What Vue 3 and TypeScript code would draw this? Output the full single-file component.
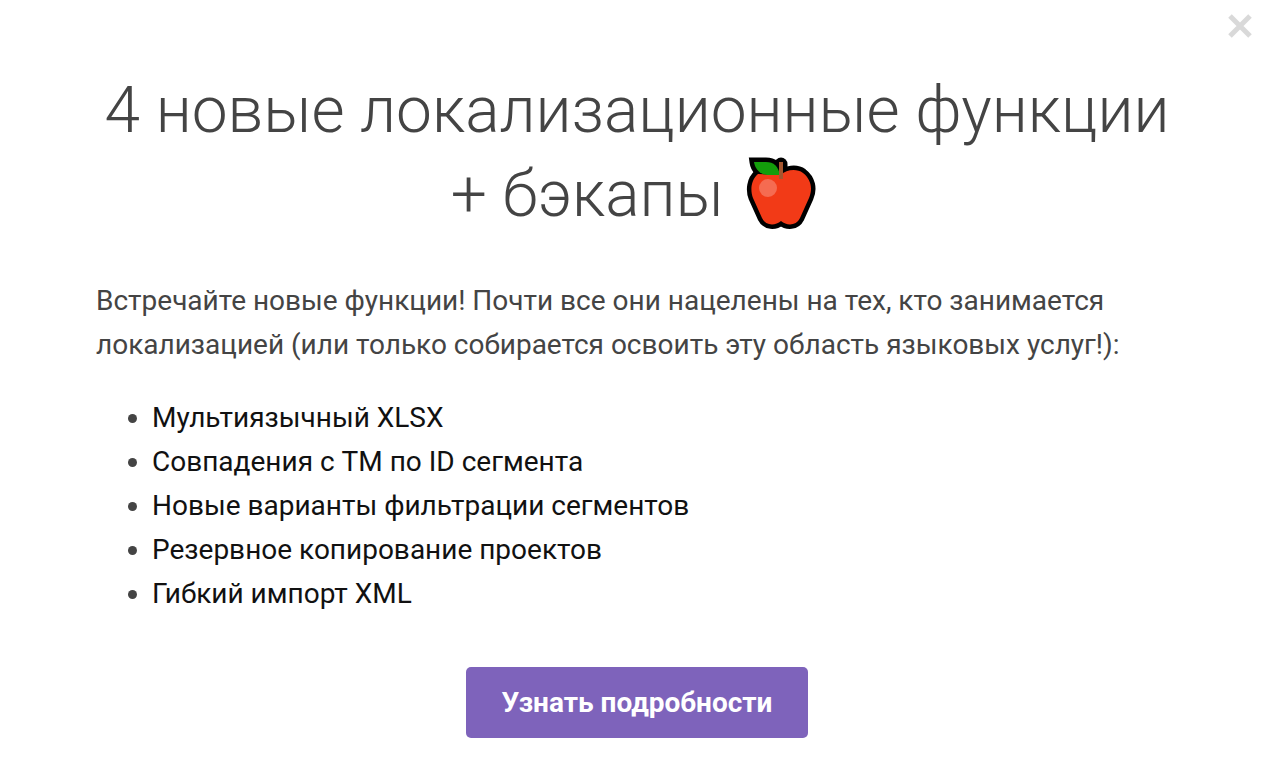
<script setup lang="ts">
const features: string[] = [
  'Мультиязычный XLSX',
  'Совпадения с TM по ID сегмента',
  'Новые варианты фильтрации сегментов',
  'Резервное копирование проектов',
  'Гибкий импорт XML',
]
</script>

<template>
  <main class="modal">
    <button class="close" type="button" aria-label="Закрыть">
      <svg viewBox="0 0 24 24" aria-hidden="true"><path d="M2 2L22 22M22 2L2 22" /></svg>
    </button>
    <h1>
      4 новые локализационные функции + бэкапы
      <svg class="apple" viewBox="0 0 68 74" aria-hidden="true">
        <g fill="#000" stroke="#000" stroke-width="9" stroke-linejoin="round">
          <path d="M34 18C39 13 49 11 56 16C64 22 66 32 62 41L53 61C49 69 40 69 34 64C28 69 19 69 15 61L6 41C3 33 4 23 11 17Z" />
          <path d="M7 5H19C27 5 31 9 33 18H22C13 18 8 12 7 5Z" stroke-linejoin="miter" />
          <path d="M34 18V7" stroke-width="13" stroke-linecap="round" />
        </g>
        <path d="M34 18C39 13 49 11 56 16C64 22 66 32 62 41L53 61C49 69 40 69 34 64C28 69 19 69 15 61L6 41C3 33 4 23 11 17Z" fill="#f23a17" />
        <path d="M7 5H19C27 5 31 9 33 18H22C13 18 8 12 7 5Z" fill="#139d0b" />
        <path d="M34 22V5" stroke="#a5562f" stroke-width="4" />
        <circle cx="21" cy="31" r="9" fill="#f56b51" />
      </svg>
    </h1>
    <p>
      Встречайте новые функции! Почти все они нацелены на тех, кто занимается локализацией (или только собирается освоить эту область языковых услуг!):
    </p>
    <ul>
      <li v-for="feature in features" :key="feature"><span>{{ feature }}</span></li>
    </ul>
    <button class="action" type="button">Узнать подробности</button>
  </main>
</template>

<style>
body {
  background: #fff;
}
</style>

<style scoped>
.modal {
  position: relative;
  display: flex;
  flex-direction: column;
  padding: 69px 102px 46px 96px;
  color: #444;
  font-family: Roboto, "Open Sans", sans-serif;
  font-size: 28px;
  line-height: 44px;
}
.close {
  position: absolute;
  top: 14px;
  right: 28px;
  width: 24px;
  height: 24px;
  padding: 0;
  border: 0;
  background: none;
  cursor: pointer;
}
.close svg {
  display: block;
  width: 100%;
  fill: none;
  stroke: #d9d9d9;
  stroke-width: 5;
}
h1 {
  margin: 0;
  font-size: 64px;
  font-weight: 300;
  line-height: 84px;
  text-align: center;
}
.apple {
  width: 68px;
  height: 74px;
  margin: 0 8px;
  overflow: visible;
  vertical-align: -15px;
  fill: none;
}
p {
  margin: 42px 0 0;
}
ul {
  margin: 29px 0 0;
  padding: 0 0 0 56px;
}
li span {
  color: #111;
}
.action {
  align-self: center;
  margin-top: 51px;
  padding: 0 36px;
  height: 71px;
  border: 0;
  border-radius: 5px;
  background: #7e63bb;
  color: #fff;
  font: 700 28px/71px Roboto, "Open Sans", sans-serif;
  cursor: pointer;
}
</style>
